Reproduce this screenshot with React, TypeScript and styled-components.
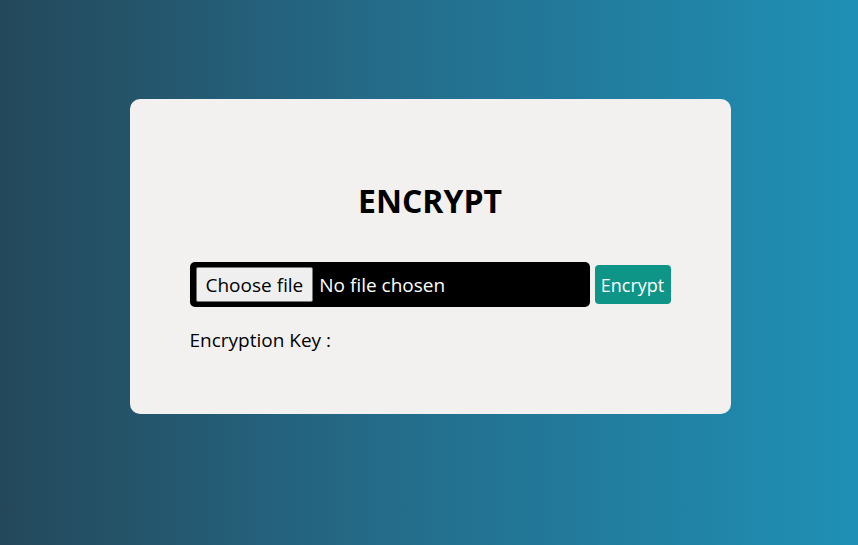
import React from "react";
import styled, { createGlobalStyle } from "styled-components";

const GlobalStyle = createGlobalStyle`
  html, body {
    margin: 0;
    padding: 0;
  }
  body {
    min-height: 100vh;
    background: linear-gradient(to right, #24485a 0%, #246c8a 45%, #1f90b5 100%);
    font-family: "Open Sans", "Noto Sans", sans-serif;
  }
`;

const Page = styled.main`
  min-height: 100vh;
  box-sizing: border-box;
  display: flex;
  flex-direction: column;
  align-items: center;
  padding: 99px 0 0 2px;
`;

const Card = styled.section`
  width: 601px;
  height: 315px;
  box-sizing: border-box;
  background: #f3f1f0;
  border-radius: 10px;
  padding: 82px 60px 0 60px;
  display: flex;
  flex-direction: column;
`;

const Title = styled.h1`
  margin: 0;
  text-align: center;
  font-size: 32px;
  line-height: 40px;
  font-weight: 700;
  color: #000;
`;

const Row = styled.div`
  margin-top: 41px;
  display: flex;
  align-items: center;
  gap: 5px;
`;

const FileBox = styled.label`
  width: 400px;
  height: 45px;
  box-sizing: border-box;
  background: #000;
  border-radius: 5px;
  padding: 0 6px;
  display: flex;
  align-items: center;
  gap: 6px;
  cursor: pointer;
`;

const HiddenInput = styled.input`
  display: none;
`;

const FileButton = styled.span`
  height: 35px;
  box-sizing: border-box;
  padding: 0 9px;
  display: flex;
  align-items: center;
  background: #efefef;
  border: 1px solid #767676;
  border-radius: 2px;
  color: #000;
  font-size: 19px;
`;

const FileName = styled.span`
  color: #fff;
  font-size: 19px;
`;

const EncryptButton = styled.button`
  width: 76px;
  height: 39px;
  border: none;
  border-radius: 4px;
  background: #0f9488;
  color: #fff;
  font-family: inherit;
  font-size: 18px;
  padding: 0;
  cursor: pointer;
`;

const KeyLine = styled.p`
  margin: 20px 0 0 0;
  font-size: 19px;
  line-height: 26px;
  color: #000;
`;

export default function App() {
  return (
    <>
      <GlobalStyle />
      <Page>
        <Card>
          <Title>ENCRYPT</Title>
          <Row>
            <FileBox>
              <HiddenInput type="file" />
              <FileButton>Choose file</FileButton>
              <FileName>No file chosen</FileName>
            </FileBox>
            <EncryptButton type="button">Encrypt</EncryptButton>
          </Row>
          <KeyLine>Encryption Key :</KeyLine>
        </Card>
      </Page>
    </>
  );
}
